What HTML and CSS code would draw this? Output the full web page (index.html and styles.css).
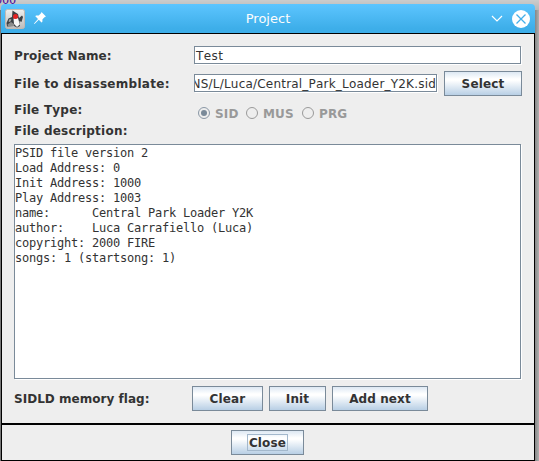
FILE: index.html
```html
<!DOCTYPE html>
<html lang="en">
<head>
<meta charset="utf-8">
<title>Project</title>
<link rel="stylesheet" href="styles.css">
</head>
<body>
<div class="backdrop">000</div>
<main class="window">
  <header class="titlebar">
    <svg class="app-icon" width="20" height="20" viewBox="0 0 20 20">
      <defs><linearGradient id="tile" x1="0" y1="0" x2="0" y2="1"><stop offset="0" stop-color="#f0efed"/><stop offset="1" stop-color="#bcbcbc"/></linearGradient></defs>
      <rect x=".5" y=".5" width="19" height="19" rx="2" fill="url(#tile)" stroke="#c5b9b0"/>
      <path d="M7.500 1.500 L10.500 3.500 L13 5 L14 9 L17 6.500 L18 8 L16.500 13 L14.500 12 L15 17 L12 18.500 L9 17 L2 17.500 L1.500 14 L3.500 9.500 L7 8 Z" fill="#3c4044"/>
      <path d="M8.500 9.500 L13 9 L14.800 15.500 L12 18 L9 15 Z" fill="#f7f7f7"/>
      <path d="M2.500 15.500 L6 13 L9 15 L9 17 L3 17.200 Z" fill="#8b8b8b"/>
      <path d="M4.500 10 L6.500 10.500 L5 13 L3.500 12.500 Z" fill="#aaa"/>
      <circle cx="10.500" cy="7.500" r="2.500" fill="#e32222"/>
    </svg>
    <svg class="pin" width="12" height="12" viewBox="0 0 12 12"><path d="M7.500 0 L12 4.500 L10.800 5 L8.500 7.300 L8.300 10 L7.500 10.500 L4.800 7.800 L.5 12 L0 11.500 L4 7 L1.300 4.300 L2 3.600 L4.700 3.500 L7 1.200 Z" fill="#fff"/></svg>
    <h1 class="title"><span>Project</span></h1>
    <svg class="chevron" width="12" height="8" viewBox="0 0 12 8"><path d="M1 1 L6 6 L11 1" fill="none" stroke="#fff" stroke-width="1.200"/></svg>
    <svg class="close-icon" width="18" height="18" viewBox="0 0 18 18"><circle cx="9" cy="9" r="9" fill="#fff"/><path d="M4.500 4.500 L13.500 13.500 M13.500 4.500 L4.500 13.500" stroke="#43aee9" stroke-width="1.300"/></svg>
  </header>
  <section class="form">
    <div class="row name-row"><label class="label">Project Name:</label><div class="field"><span class="name-text">Test</span></div></div>
    <div class="row file-row"><label class="label">File to disassemblate:</label><div class="field path"><span class="path-text">NS/L/Luca/Central_Park_Loader_Y2K.sid</span></div><button class="button select">Select</button></div>
    <div class="row type-row"><span class="label">File Type:</span>
      <div class="radios">
        <span class="radio sid"><svg width="12" height="12" viewBox="0 0 12 12"><circle cx="6" cy="6" r="5.500" fill="none" stroke="#8a97a5"/><circle cx="6" cy="6" r="3" fill="#7a8a99"/></svg>SID</span>
        <span class="radio mus"><svg width="12" height="12" viewBox="0 0 12 12"><circle cx="6" cy="6" r="5.500" fill="none" stroke="#999"/></svg>MUS</span>
        <span class="radio"><svg width="12" height="12" viewBox="0 0 12 12"><circle cx="6" cy="6" r="5.500" fill="none" stroke="#999"/></svg>PRG</span>
      </div>
    </div>
    <div class="row desc-row"><span class="label">File description:</span></div>
    <pre class="description">PSID file version 2
Load Address: 0
Init Address: 1000
Play Address: 1003
name:      Central Park Loader Y2K
author:    Luca Carrafiello (Luca)
copyright: 2000 FIRE
songs: 1 (startsong: 1)</pre>
    <div class="row flag-row"><span class="label">SIDLD memory flag:</span><button class="button clear">Clear</button><button class="button init">Init</button><button class="button next">Add next</button></div>
  </section>
  <footer class="footer"><button class="button close"><span class="focus">Close</span></button></footer>
</main>
</body>
</html>
```

FILE: styles.css
```css
* { box-sizing: border-box; }
body {
  margin: 0;
  width: 539px;
  height: 461px;
  overflow: hidden;
  position: relative;
  padding: 4px 4px 0 1px;
  background: linear-gradient(90deg, #777 0, #777 534px, #868686 535px, #b0b0b0 539px);
  font: bold 12px/15px "DejaVu Sans", sans-serif;
  font-kerning: none;
  letter-spacing: .15px;
  color: #333;
}
body::before {
  content: "";
  position: absolute;
  inset: 0 0 auto 0;
  height: 10px;
  background: linear-gradient(#ccc, #b8b8b8);
}
.backdrop {
  position: absolute;
  left: -5px;
  top: -7px;
  font: 12px/14px "DejaVu Sans Mono", monospace;
  letter-spacing: -.2px;
  color: #4b0a9c;
}
.window {
  position: relative;
  width: 534px;
  height: 457px;
  border-radius: 4px 4px 0 0;
}
.titlebar {
  display: flex;
  align-items: center;
  height: 29px;
  padding: 0 5px 0 4px;
  background: linear-gradient(#5dc5ff, #3daee9 85%);
  border-radius: 4px 4px 0 0;
}
.app-icon { flex: none; }
.pin { margin-left: 9px; margin-top: -1px; }
.title {
  flex: 1;
  margin: 0;
  padding-right: 1px;
  text-align: center;
  font: 13px/16px "DejaVu Sans", sans-serif;
  letter-spacing: 0;
  color: #fcfcfc;
}
.chevron { margin-right: 9px; }
.form {
  height: 390px;
  padding: 12px 12px 0;
  background: #eee;
  border: solid #000;
  border-width: 1px 1px 0;
}
.row { display: flex; align-items: center; }
.label { width: 180px; flex: none; white-space: nowrap; padding-top: 2px; }
.name-row { height: 18px; }
.file-row .label { letter-spacing: .3px; }
.type-row .label, .desc-row .label { letter-spacing: .23px; }
.field {
  width: 327px;
  height: 18px;
  padding-left: 1px;
  overflow: hidden;
  background: #fff;
  border: 1px solid #7a8a99;
  box-shadow: 1px 1px #fff;
  font-weight: normal;
  line-height: 18px;
  white-space: nowrap;
}
.name-text { letter-spacing: .4px; }
.file-row { height: 25px; margin-top: 7px; }
.file-row .field { margin-bottom: 1px; }
.path { width: 243px; display: flex; justify-content: flex-end; }
.path-text { letter-spacing: .2px; }
.button {
  height: 25px;
  padding: 1px 0 0;
  border: 1px solid #7a8a99;
  background: linear-gradient(#dde8f3 0, #fff 30%, #fff 36%, #b8cfe5 100%);
  color: #333;
  font: inherit;
  letter-spacing: inherit;
  white-space: nowrap;
}
.select { width: 78px; margin-left: 7px; }
.type-row { height: 23px; margin-top: 4px; }
.type-row .label { padding-bottom: 4px; }
.radios { display: flex; margin-left: 4px; padding-top: 5px; color: #999; }
.radio { display: flex; align-items: center; gap: 5px; }
.radio svg { margin-bottom: 2px; }
.sid { width: 48px; }
.mus { width: 56px; }
.desc-row { height: 15px; }
.description {
  width: 507px;
  height: 235px;
  margin: 6px 0 0;
  padding: 1px 0;
  background: #fff;
  border: 1px solid #7a8a99;
  box-shadow: 1px 1px #fff;
  font: 12px/15px "DejaVu Sans Mono", monospace;
  letter-spacing: -.224px;
}
.flag-row { height: 25px; margin-top: 7px; }
.flag-row .label { width: 178px; letter-spacing: .03px; }
.clear { width: 71px; }
.init { width: 57px; margin-left: 6px; }
.next { width: 96px; margin-left: 6px; letter-spacing: .1px; }
.footer {
  height: 38px;
  padding: 7px 0 0 229px;
  background: #eee;
  border: 1px solid #000;
  border-top-width: 2px;
  display: flex;
  align-items: flex-start;
}
.close { width: 73px; margin-top: -2px; padding: 0; }
.focus { display: block; width: 41px; height: 17px; margin: 0 auto; border: 1px solid #a3b8cc; line-height: 16px; }
```
